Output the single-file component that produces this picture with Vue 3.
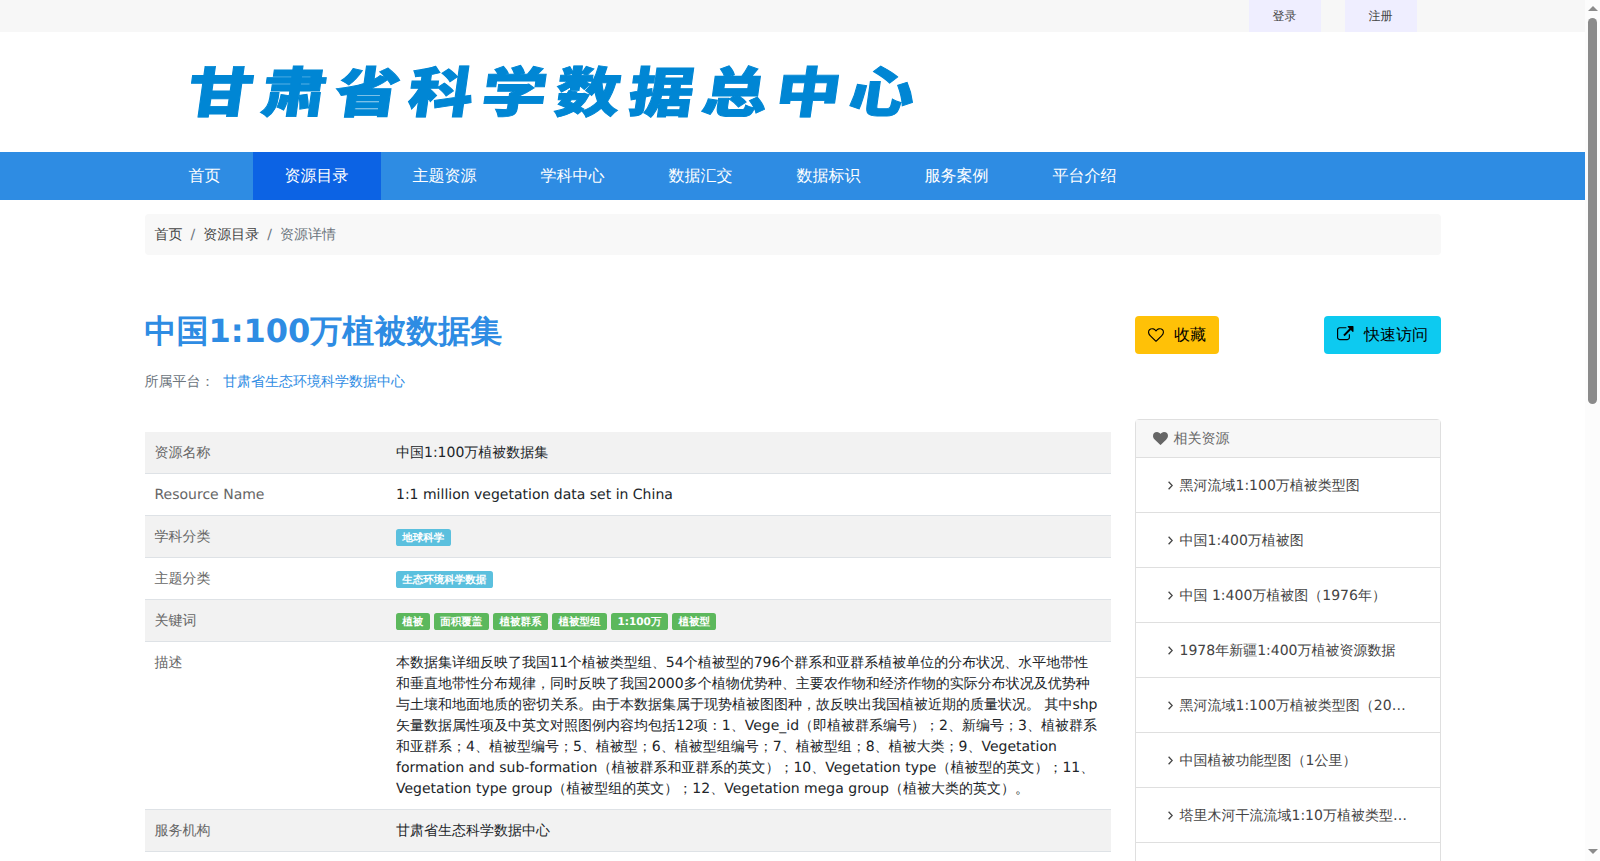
<template>
  <div class="window">
    <div class="page">
      <div class="topbar">
        <div class="container topbar-inner">
          <a v-for="t in ['登录', '注册']" :key="t" class="auth-link">{{ t }}</a>
        </div>
      </div>

      <header class="header">
        <div class="container">
          <svg class="logo" width="760" height="120" viewBox="0 0 760 120">
            <g v-for="(ch, i) in siteName" :key="i" :transform="`translate(${16.5 + i * 73.5} 79.5) skewX(-8) scale(1.12 0.93)`">
              <text x="0" y="0">{{ ch }}</text>
            </g>
          </svg>
        </div>
      </header>

      <nav class="nav">
        <div class="container nav-inner">
          <a v-for="n in navItems" :key="n" class="nav-item" :class="{ active: n === '资源目录' }">{{ n }}</a>
        </div>
      </nav>

      <main class="container">
        <div class="breadcrumb">
          <a>首页</a><span class="sep">/</span><a>资源目录</a><span class="sep">/</span><span class="current">资源详情</span>
        </div>

        <div class="row">
          <section class="main-col">
            <h1 class="title">中国1:100万植被数据集</h1>
            <p class="platform">所属平台：<a>甘肃省生态环境科学数据中心</a></p>

            <table class="info">
              <tbody>
                <tr v-for="r in rows" :key="r.label">
                  <td class="label">{{ r.label }}</td>
                  <td v-if="r.tags">
                    <template v-for="t in r.tags" :key="t"><span class="tag" :class="r.kind">{{ t }}</span>{{ ' ' }}</template>
                  </td>
                  <td v-else>{{ r.value }}</td>
                </tr>
              </tbody>
            </table>
          </section>

          <aside class="side-col">
            <div class="actions">
              <button type="button" class="btn btn-warning">
                <svg width="16" height="16" viewBox="0 0 1792 1792"><path d="M1664 596q0-81-21.500-143t-55-98.500-81.500-59.500-94-31-98-8-112 25.500-110.500 64-86.500 72-60 61.500q-18 22-49 22t-49-22q-24-28-60-61.500t-86.500-72-110.500-64-112-25.500-98 8-94 31-81.500 59.500-55 98.500-21.500 143q0 168 187 355l581 560 580-559q188-188 188-356zm128 0q0 221-229 450l-623 600q-18 18-44 18t-44-18l-624-602q-10-8-27.500-26t-55.500-65.500-68-97.500-53.500-121-23.500-138q0-220 127-344t351-124q62 0 126.500 21.500t120 58 95.500 68.500 76 68q36-36 76-68t95.500-68.500 120-58 126.500-21.500q224 0 351 124t127 344z"/></svg>
                收藏
              </button>
              <button type="button" class="btn btn-info">
                <svg width="16.500" height="16.500" viewBox="0 0 1792 1792"><path d="M1408 928v320q0 119-84.500 203.500t-203.500 84.500h-832q-119 0-203.500-84.500t-84.500-203.500v-832q0-119 84.500-203.500t203.500-84.500h704q14 0 23 9t9 23v64q0 14-9 23t-23 9h-704q-66 0-113 47t-47 113v832q0 66 47 113t113 47h832q66 0 113-47t47-113v-320q0-14 9-23t23-9h64q14 0 23 9t9 23zm384-864v512q0 26-19 45t-45 19-45-19l-176-176-652 652q-10 10-23 10t-23-10l-114-114q-10-10-10-23t10-23l652-652-176-176q-19-19-19-45t19-45 45-19h512q26 0 45 19t19 45z"/></svg>
                快速访问
              </button>
            </div>

            <div class="card">
              <div class="card-header">
                <svg width="15" height="15" viewBox="0 0 1792 1792"><path d="M896 1664q-26 0-44-18l-624-602q-10-8-27.500-26t-55.500-65.500-68-97.500-53.500-121-23.500-138q0-220 127-344t351-124q62 0 126.500 21.500t120 58 95.500 68.500 76 68q36-36 76-68t95.500-68.500 120-58 126.500-21.500q224 0 351 124t127 344q0 221-229 450l-623 600q-18 18-44 18z"/></svg>
                <span>相关资源</span>
              </div>
              <div v-for="(item, i) in related" :key="i" class="card-item">
                <div v-if="item" class="ellipsis">
                  <svg width="5" height="9" viewBox="0 0 5 9"><path d="M.6.8l3.600 3.700-3.600 3.700" fill="none" stroke="currentColor" stroke-width="1.300"/></svg>
                  <span>{{ item }}</span>
                </div>
              </div>
            </div>
          </aside>
        </div>
      </main>
    </div>

    <div class="scrollbar">
      <i class="arrow up"></i>
      <i class="thumb"></i>
      <i class="arrow down"></i>
    </div>
  </div>
</template>

<script setup>
const siteName = [...'甘肃省科学数据总中心']

const navItems = ['首页', '资源目录', '主题资源', '学科中心', '数据汇交', '数据标识', '服务案例', '平台介绍']

const rows = [
  { label: '资源名称', value: '中国1:100万植被数据集' },
  { label: 'Resource Name', value: '1:1 million vegetation data set in China' },
  { label: '学科分类', kind: 'blue', tags: ['地球科学'] },
  { label: '主题分类', kind: 'blue', tags: ['生态环境科学数据'] },
  { label: '关键词', kind: 'green', tags: ['植被', '面积覆盖', '植被群系', '植被型组', '1:100万', '植被型'] },
  {
    label: '描述',
    value: '本数据集详细反映了我国11个植被类型组、54个植被型的796个群系和亚群系植被单位的分布状况、水平地带性和垂直地带性分布规律，同时反映了我国2000多个植物优势种、主要农作物和经济作物的实际分布状况及优势种与土壤和地面地质的密切关系。由于本数据集属于现势植被图图种，故反映出我国植被近期的质量状况。 其中shp矢量数据属性项及中英文对照图例内容均包括12项：1、Vege_id（即植被群系编号）；2、新编号；3、植被群系和亚群系；4、植被型编号；5、植被型；6、植被型组编号；7、植被型组；8、植被大类；9、Vegetation formation and sub-formation（植被群系和亚群系的英文）；10、Vegetation type（植被型的英文）；11、Vegetation type group（植被型组的英文）；12、Vegetation mega group（植被大类的英文）。',
  },
  { label: '服务机构', value: '甘肃省生态科学数据中心' },
]

const related = [
  '黑河流域1:100万植被类型图',
  '中国1:400万植被图',
  '中国 1:400万植被图（1976年）',
  '1978年新疆1:400万植被资源数据',
  '黑河流域1:100万植被类型图（2000年）',
  '中国植被功能型图（1公里）',
  '塔里木河干流流域1:10万植被类型图数据集',
  '',
]
</script>

<style>
body { background: #fff; overflow: hidden; }
</style>

<style scoped>
* { box-sizing: border-box; }
.window {
  display: flex; height: 861px; overflow: hidden; text-rendering: geometricPrecision;
  font-family: "DejaVu Sans", sans-serif; font-size: 14px; line-height: 21px; color: #212529;
}
.page { flex: 1; min-width: 0; }
.container { width: 1296px; margin: 0 auto; }

.topbar { height: 32px; background: #f7f7f7; }
.topbar-inner { display: flex; justify-content: flex-end; gap: 24px; padding-right: 24px; }
.auth-link { width: 72px; height: 32px; line-height: 32px; text-align: center; font-size: 12px; color: #444; background: #efeeff; }

.header { height: 120px; }
.logo { display: block; margin-left: 24px; }
.logo text {
  font-family: "Noto Sans CJK SC", sans-serif; font-size: 58px; font-weight: 900;
  fill: #0086d4; stroke: #0086d4; stroke-width: 1;
}

.nav { height: 48px; background: #2e8ce3; }
.nav-inner { display: flex; padding-left: 12px; }
.nav-item { padding: 0 32px; font-size: 16px; line-height: 48px; color: #fff; }
.nav-item.active { background: #0c63e4; }

.breadcrumb { display: flex; margin-top: 14px; padding: 11px 10px 9px; border-radius: 4px; background: #f8f8f8; color: #6c757d; }
.breadcrumb a { color: #444; }
.sep { padding: 0 8px; }

.row { display: flex; gap: 24px; }
.main-col { width: 966px; padding-top: 57px; }
.title { margin: 0; font-size: 32px; line-height: 38px; font-weight: 700; color: #2e8ce3; }
.platform { margin: 22px 0 0; color: #6c757d; }
.platform a { margin-left: 8.500px; color: #2e8ce3; }

.info { width: 100%; margin-top: 39px; border-collapse: separate; border-spacing: 0; table-layout: fixed; }
.info td { padding: 11px 10px 9px; vertical-align: top; border-bottom: 1px solid #dee2e6; }
.info .label { width: 25%; color: #666; }
.info tr:nth-child(odd) td { background: #f2f2f2; }
.tag { padding: .3em .6em .2em; border-radius: .25em; font-size: 75%; font-weight: 700; line-height: 1; color: #fff; }
.blue { background: #5bc0de; }
.green { background: #5cb85c; }

.side-col { width: 306px; padding-top: 61px; }
.actions { display: flex; justify-content: space-between; }
.btn {
  display: flex; align-items: center; gap: 10px; height: 38px; padding: 0 13px 1px;
  border: 0; border-radius: 4px; font: inherit; font-size: 16px; color: #000;
}
.btn-warning { background: #ffc107; }
.btn-info { background: #0dcaf0; }

.card { margin-top: 65px; border: 1px solid #dfdfdf; border-radius: 4px; }
.card-header { display: flex; align-items: center; gap: 6px; padding: 9px 17px 7px; color: #666; fill: #666; background: #f7f7f7; border-bottom: 1px solid #dfdfdf; }
.card-header svg { margin-bottom: 3px; }
.card-item { height: 55px; padding: 18px 32px 15px; border-bottom: 1px solid #dfdfdf; color: #444; }
.ellipsis { overflow: hidden; white-space: nowrap; text-overflow: ellipsis; }
.ellipsis svg { margin-right: 7px; }

.scrollbar { display: flex; flex-direction: column; align-items: center; width: 15px; background: #fcfcfc; }
.arrow { border: 5px solid transparent; border-top-width: 0; border-bottom-width: 0; }
.up { margin-top: 6px; border-bottom: 5px solid #8b8b8b; }
.down { margin: auto 0 7px; border-top: 5px solid #8b8b8b; }
.thumb { width: 9px; height: 386px; margin-top: 7px; border-radius: 5px; background: #8b8b8b; }
</style>
